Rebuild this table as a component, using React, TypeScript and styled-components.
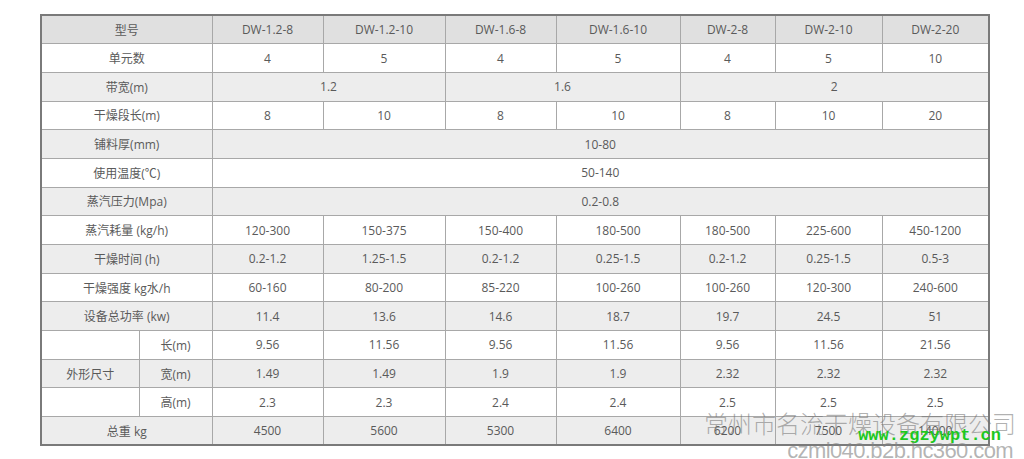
import React from 'react';
import styled, { createGlobalStyle } from 'styled-components';

type Cell = { text: string; span?: number };
type Row = { label: string; sub?: string; cells: Cell[] };

const models = ['DW-1.2-8', 'DW-1.2-10', 'DW-1.6-8', 'DW-1.6-10', 'DW-2-8', 'DW-2-10', 'DW-2-20'];

const each = (...values: string[]): Cell[] => values.map((text) => ({ text }));

const rows: Row[] = [
  { label: '单元数', cells: each('4', '5', '4', '5', '4', '5', '10') },
  {
    label: '带宽(m)',
    cells: [
      { text: '1.2', span: 2 },
      { text: '1.6', span: 2 },
      { text: '2', span: 3 },
    ],
  },
  { label: '干燥段长(m)', cells: each('8', '10', '8', '10', '8', '10', '20') },
  { label: '铺料厚(mm)', cells: [{ text: '10-80', span: 7 }] },
  { label: '使用温度(℃)', cells: [{ text: '50-140', span: 7 }] },
  { label: '蒸汽压力(Mpa)', cells: [{ text: '0.2-0.8', span: 7 }] },
  { label: '蒸汽耗量 (kg/h)', cells: each('120-300', '150-375', '150-400', '180-500', '180-500', '225-600', '450-1200') },
  { label: '干燥时间 (h)', cells: each('0.2-1.2', '1.25-1.5', '0.2-1.2', '0.25-1.5', '0.2-1.2', '0.25-1.5', '0.5-3') },
  { label: '干燥强度 kg水/h', cells: each('60-160', '80-200', '85-220', '100-260', '100-260', '120-300', '240-600') },
  { label: '设备总功率 (kw)', cells: each('11.4', '13.6', '14.6', '18.7', '19.7', '24.5', '51') },
  { label: '', sub: '长(m)', cells: each('9.56', '11.56', '9.56', '11.56', '9.56', '11.56', '21.56') },
  { label: '外形尺寸', sub: '宽(m)', cells: each('1.49', '1.49', '1.9', '1.9', '2.32', '2.32', '2.32') },
  { label: '', sub: '高(m)', cells: each('2.3', '2.3', '2.4', '2.4', '2.5', '2.5', '2.5') },
  { label: '总重 kg', cells: each('4500', '5600', '5300', '6400', '6200', '7500', '14000') },
];

const widths = [98, 73, 111, 122, 111, 124, 95, 107, 107];

export default function App() {
  return (
    <>
      <GlobalStyle />
      <Page>
        <Frame>
          <Table>
            <colgroup>
              {widths.map((w, i) => (
                <col key={i} style={{ width: w }} />
              ))}
            </colgroup>
            <tbody>
              <Tr $shade='head'>
                <Td colSpan={2}>型号</Td>
                {models.map((m) => (
                  <Td key={m}>{m}</Td>
                ))}
              </Tr>
              {rows.map((row, i) => (
                <Tr key={i} $shade={i % 2 === 1 ? 'gray' : 'white'}>
                  {row.sub !== undefined ? (
                    <>
                      <Td>{row.label}</Td>
                      <Td>{row.sub}</Td>
                    </>
                  ) : (
                    <Td colSpan={2}>{row.label}</Td>
                  )}
                  {row.cells.map((c, j) => (
                    <Td key={j} colSpan={c.span}>
                      {c.text}
                    </Td>
                  ))}
                </Tr>
              ))}
            </tbody>
          </Table>
          {/* site watermark stamped over the bottom-right corner */}
          <Watermark>
            <Company>常州市名流干燥设备有限公司</Company>
            <Site>www.zgzywpt.cn</Site>
            <Domain>czml040.b2b.hc360.com</Domain>
          </Watermark>
        </Frame>
      </Page>
    </>
  );
}

const GlobalStyle = createGlobalStyle`
  html, body {
    margin: 0;
    padding: 0;
    background: #fff;
    overflow: hidden;
  }
  body {
    font-family: 'Open Sans', 'Noto Sans CJK SC', sans-serif;
  }
`;

const Page = styled.div`
  width: 1024px;
  height: 459px;
  padding: 14px 0 0 40px;
  box-sizing: border-box;
`;

const Frame = styled.div`
  position: relative;
  width: 948px;
`;

const Table = styled.table`
  width: 948px;
  height: 431px;
  border-collapse: collapse;
  table-layout: fixed;
  border: 2px solid #7a7a7a;
  color: #5a5a5a;
  font-size: 12px;
`;

const Tr = styled.tr<{ $shade: 'head' | 'gray' | 'white' }>`
  height: 28.7px;
  background: ${({ $shade }) =>
    $shade === 'head' ? '#e0e0e0' : $shade === 'gray' ? '#ededed' : '#ffffff'};
`;

const Td = styled.td`
  border: 1px solid #a8a8a8;
  text-align: center;
  vertical-align: middle;
  padding: 0;
  white-space: nowrap;
  overflow: hidden;
`;

const Watermark = styled.div`
  position: absolute;
  right: -28px;
  top: 397px;
  display: flex;
  flex-direction: column;
  align-items: flex-end;
  pointer-events: none;
  white-space: nowrap;
  line-height: 1;
`;

const Company = styled.div`
  font-family: 'Noto Sans CJK SC', sans-serif;
  font-size: 24px;
  font-weight: 300;
  color: rgba(110, 110, 110, 0.55);
`;

const Site = styled.div`
  margin: -8px 15px 0 0;
  font-family: 'Liberation Mono', monospace;
  font-size: 17px;
  font-weight: 700;
  color: #1ec81e;
`;

const Domain = styled.div`
  margin: -4px 3px 0 0;
  font-family: 'Liberation Sans', sans-serif;
  font-size: 22px;
  letter-spacing: -0.6px;
  color: rgba(130, 130, 130, 0.6);
`;
